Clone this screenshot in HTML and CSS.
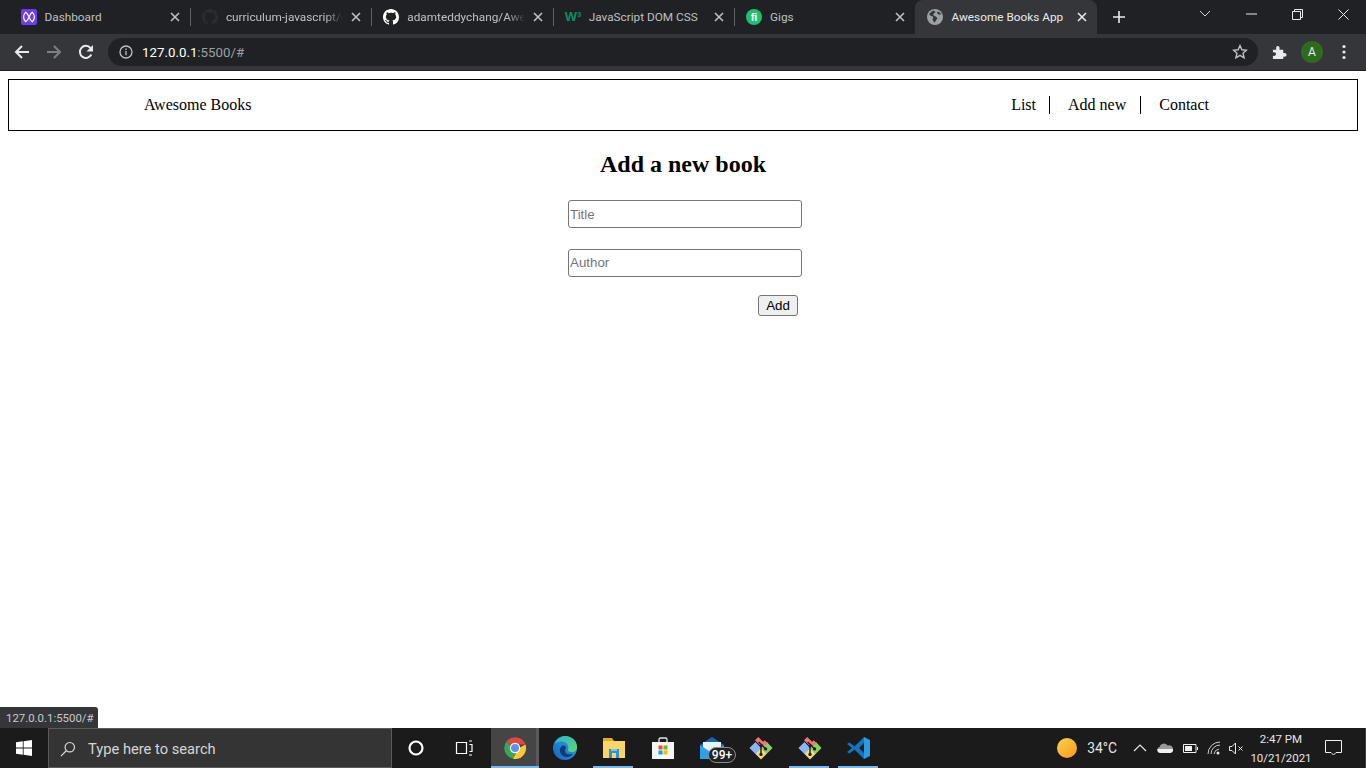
FILE: index.html
```html
<!DOCTYPE html>
<html>
<head>
    <meta charset="utf-8">
    <title>Awesome Books App</title>
    <link rel="stylesheet" href="styles.css">
</head>
<body>
    <svg class="defs" width="0" height="0">
        <defs>
            <linearGradient id="cloud-fill" x1="0" y1="0" x2="0" y2="1"><stop offset="0.55" stop-color="#9a9a9a"/><stop offset="0.56" stop-color="#f0f0f0"/></linearGradient>
        </defs>
        <symbol id="tab-close" viewBox="0 0 10 10"><path d="M1 1l8 8M9 1l-8 8" stroke="currentColor" stroke-width="1.6" fill="none"/></symbol>
        <symbol id="octocat" viewBox="0 0 16 16"><path fill="currentColor" d="M8 0C3.58 0 0 3.58 0 8c0 3.54 2.29 6.53 5.47 7.59.4.07.55-.17.55-.38 0-.19-.01-.82-.01-1.49-2.01.37-2.53-.49-2.69-.94-.09-.23-.48-.94-.82-1.13-.28-.15-.68-.52-.01-.53.63-.01 1.08.58 1.23.82.72 1.21 1.87.87 2.33.66.07-.52.28-.87.51-1.07-1.78-.2-3.64-.89-3.64-3.95 0-.87.31-1.59.82-2.15-.08-.2-.36-1.02.08-2.12 0 0 .67-.21 2.2.82.64-.18 1.32-.27 2-.27.68 0 1.36.09 2 .27 1.53-1.04 2.2-.82 2.2-.82.44 1.1.16 1.92.08 2.12.51.56.82 1.27.82 2.15 0 3.07-1.87 3.75-3.65 3.95.29.25.54.73.54 1.48 0 1.07-.01 1.93-.01 2.2 0 .21.15.46.55.38A8.013 8.013 0 0016 8c0-4.42-3.58-8-8-8z"/></symbol>
        <symbol id="git-gui" viewBox="0 0 26 26">
            <path fill="#f0dc78" d="M13 25.500l-6.500-6.500L13 12.500l6.500 6.500z"/>
            <path fill="#8cb4fa" d="M.5 13L7 6.500l6 6.500-6 6.500z"/>
            <path fill="#8ccf64" d="M13 13l6.500-6.500L25.500 13 19 19.500z"/>
            <path fill="#f07878" d="M6.500 4.500L10 1l5.500 5.500L12 10zM13.500 8l3.500-3.500 3 3L16.500 11z"/>
            <path d="M10.500 6.500l7 7M13 12v8" stroke="#222" stroke-width="1.6" fill="none"/>
            <circle cx="13" cy="20" r="1.800" fill="#222"/>
            <circle cx="18" cy="14" r="1.800" fill="#222"/>
        </symbol>
    </svg>

    <header class="browser-top">
        <div class="tab-strip">
            <div class="tab">
                <svg class="favicon" viewBox="0 0 16 16"><rect width="16" height="16" rx="2" fill="#6d3df5"/><path d="M4.800 3.200c-3 3.200-3 6.400 0 9.600 1.500-1 2.400-2.800 3.200-4.800.8 2 1.700 3.800 3.200 4.800 3-3.200 3-6.400 0-9.600C9.700 4.200 8.800 6 8 8c-.8-2-1.700-3.800-3.200-4.800z" fill="none" stroke="#fff" stroke-width="1.200"/></svg>
                <span class="tab-title">Dashboard</span>
                <svg class="tab-x"><use href="#tab-close"/></svg>
            </div>
            <div class="tab">
                <svg class="favicon favicon-dim"><use href="#octocat"/></svg>
                <span class="tab-title tab-fade">curriculum-javascript/curriculum</span>
                <svg class="tab-x"><use href="#tab-close"/></svg>
            </div>
            <div class="tab">
                <svg class="favicon favicon-white"><use href="#octocat"/></svg>
                <span class="tab-title tab-fade">adamteddychang/Awesome-Books</span>
                <svg class="tab-x"><use href="#tab-close"/></svg>
            </div>
            <div class="tab">
                <span class="favicon favicon-w3">W³</span>
                <span class="tab-title">JavaScript DOM CSS</span>
                <svg class="tab-x"><use href="#tab-close"/></svg>
            </div>
            <div class="tab tab-before-active">
                <span class="favicon favicon-fi">fi</span>
                <span class="tab-title">Gigs</span>
                <svg class="tab-x"><use href="#tab-close"/></svg>
            </div>
            <div class="tab tab-active">
                <svg class="favicon" viewBox="0 0 16 16"><circle cx="8" cy="8" r="8" fill="#9aa0a6"/><path d="M7 1.500C5 2 3 3.500 2.300 5.500l1.200 1.200 2 .5.800 1.500-.8 1.500 1.500 3.300c.6 0 1-.2 1.200-.8l1.300-2.200 1-1-1.300-1.800-2.200-.9-1-1.300L7 4.200l1.500-1zM10.500 2.500l-.5 1.500 1.500 1.500 2.800 0c-.6-1.300-2.300-2.700-3.800-3z" fill="#35363a"/></svg>
                <span class="tab-title">Awesome Books App</span>
                <svg class="tab-x"><use href="#tab-close"/></svg>
            </div>
            <svg class="new-tab" viewBox="0 0 12 12"><path d="M6 0v12M0 6h12" stroke="#e8eaed" stroke-width="1.600"/></svg>
            <div class="window-btns">
                <span class="win-btn"><svg width="12" height="8" viewBox="0 0 12 8"><path d="M1 1l5 5 5-5" stroke="#d0d2d5" fill="none"/></svg></span>
                <span class="win-btn"><svg width="11" height="2" viewBox="0 0 11 2"><path d="M0 1h11" stroke="#e8eaed"/></svg></span>
                <span class="win-btn"><svg width="11" height="11" viewBox="0 0 11 11"><path d="M.5 2.500h8v8h-8zM2.500 2.500v-2h8v8h-2" stroke="#e8eaed" fill="none"/></svg></span>
                <span class="win-btn"><svg width="11" height="11" viewBox="0 0 11 11"><path d="M.5.500l10 10M10.500.500l-10 10" stroke="#e8eaed" fill="none"/></svg></span>
            </div>
        </div>
        <div class="toolbar">
            <svg class="tool-icon" viewBox="0 0 16 16"><path d="M15 8H2M8 2L2 8l6 6" stroke="#e8eaed" stroke-width="2" fill="none"/></svg>
            <svg class="tool-icon" viewBox="0 0 16 16"><path d="M1 8h13M8 2l6 6-6 6" stroke="#7d7f83" stroke-width="2" fill="none"/></svg>
            <svg class="tool-icon" viewBox="0 0 16 16"><path d="M13.300 10.500A6 6 0 1 1 12.500 4" stroke="#e8eaed" stroke-width="2" fill="none"/><path d="M15 1v6.500H8.500z" fill="#e8eaed"/></svg>
            <div class="address-bar">
                <svg class="info-icon" viewBox="0 0 14 14"><circle cx="7" cy="7" r="6" stroke="#bdc1c6" stroke-width="1.300" fill="none"/><path d="M7 6v4.200M7 3.500v1.400" stroke="#bdc1c6" stroke-width="1.300"/></svg>
                <span class="url"><b>127.0.0.1</b>:5500/#</span>
                <svg class="star-icon" viewBox="0 0 16 16"><path d="M8 1.500l1.900 4.300 4.600.4-3.500 3 1.100 4.600L8 11.400l-4.100 2.400L5 9.200l-3.500-3 4.600-.4z" stroke="#bdc1c6" stroke-width="1.400" fill="none"/></svg>
            </div>
            <svg class="puzzle-icon" viewBox="0 0 16 16"><path d="M1 5h3.500C4 2 5 1 6.200 1S8.500 2 8 5h4v3.500c3-.5 3.500 1 3.500 2s-.5 2.500-3.500 2V15H1v-3.500c2.500.5 3.200-.7 3.200-1.800S3.500 7.400 1 8z" fill="#e8eaed"/></svg>
            <span class="avatar">A</span>
            <svg class="menu-dots" viewBox="0 0 4 16"><circle cx="2" cy="2.500" r="1.600" fill="#e8eaed"/><circle cx="2" cy="8" r="1.600" fill="#e8eaed"/><circle cx="2" cy="13.500" r="1.600" fill="#e8eaed"/></svg>
        </div>
    </header>

    <main class="page">
        <nav class="main-nav">
            <a class="brand" href="#">Awesome Books</a>
            <ul class="nav-links">
                <li><a href="#">List</a></li>
                <li><a href="#">Add new</a></li>
                <li><a href="#">Contact</a></li>
            </ul>
        </nav>

        <h2 class="section-title">Add a new book</h2>
        <form class="book-form">
            <input class="book-input" type="text" placeholder="Title">
            <input class="book-input" type="text" placeholder="Author">
            <button class="add-btn" type="button">Add</button>
        </form>

        <div class="status-bubble">127.0.0.1:5500/#</div>
    </main>

    <footer class="taskbar">
        <span class="start-btn">
            <svg width="16" height="16" viewBox="0 0 16 16"><path fill="#fff" d="M0 2.300l6.800-1v6.200H0zM7.600 1.200L16 0v7.500H7.600zM0 8.400h6.800v6.300l-6.800-1zM7.600 8.400H16V16l-8.400-1.200z"/></svg>
        </span>
        <div class="search-box">
            <svg width="16" height="16" viewBox="0 0 18 18"><circle cx="11" cy="7" r="5.300" stroke="#ddd" stroke-width="1.300" fill="none"/><path d="M7 11l-6 6" stroke="#ddd" stroke-width="1.300"/></svg>
            <span>Type here to search</span>
        </div>
        <span class="bar-btn"><svg width="16" height="16" viewBox="0 0 16 16"><circle cx="8" cy="8" r="6.500" stroke="#fff" stroke-width="2.200" fill="none"/></svg></span>
        <span class="bar-btn"><svg width="18" height="16" viewBox="0 0 18 16"><path d="M1.500 2.500h10v11h-10zM14 1h3M14 15h3M14.500 4.500h2.500v7h-2.500" stroke="#fff" stroke-width="1.200" fill="none"/></svg></span>

        <span class="app app-active app-open">
            <svg class="app-icon" viewBox="0 0 24 24">
                <path d="M12 12L3.500 5.500A11 11 0 0 1 22.500 8.500H12z" fill="#e2483c"/>
                <path d="M3.500 5.500A11 11 0 0 0 10 22.800l4-7.500z" fill="#3aa757"/>
                <path d="M22.500 8.500A11 11 0 0 1 10 22.800L16 12z" fill="#fcc934"/>
                <circle cx="12" cy="12" r="5.200" fill="#fff"/>
                <circle cx="12" cy="12" r="4" fill="#5b93ee"/>
            </svg>
        </span>
        <span class="app">
            <svg class="app-icon" viewBox="0 0 24 24">
                <defs>
                    <linearGradient id="edge-a" x1="0" y1="1" x2="1" y2="0"><stop offset="0" stop-color="#1565c0"/><stop offset="1" stop-color="#2aa8e0"/></linearGradient>
                    <linearGradient id="edge-b" x1="0" y1="0" x2="1" y2="1"><stop offset="0" stop-color="#2bb4d8"/><stop offset="1" stop-color="#5fd868"/></linearGradient>
                </defs>
                <circle cx="12" cy="12" r="12" fill="url(#edge-a)"/>
                <path d="M2 8C4 2 9 0 12 0c7 0 12 5 12 11 0 3-2 5-5 5-3 0-4-1-4-2 1-3 0-7-4-8-4-1-7 0-9 2z" fill="url(#edge-b)"/>
                <path d="M9 10c-3 2-3 7 1 10 3 2 7 1 9-1 1-1 0-1-1-1-4 1-6-1-6-3 0-2 1-3 1-4-1-1-3-2-4-1z" fill="#123a7a"/>
            </svg>
        </span>
        <span class="app app-open">
            <svg class="app-icon" viewBox="0 0 24 24">
                <path d="M1 2h9l2 3H1z" fill="#e8a91f"/>
                <path d="M1 5h22v17H1z" fill="#fbd665"/>
                <path d="M7 22v-9h10v9h-3v-5h-4v5z" fill="#2a93d8"/>
                <path d="M9 13h6v2H9z" fill="#7cc4ee"/>
            </svg>
        </span>
        <span class="app">
            <svg class="app-icon" viewBox="0 0 24 24">
                <path d="M8 7V3.500A1.500 1.500 0 0 1 9.500 2h5A1.500 1.500 0 0 1 16 3.500V7" stroke="#e8e8e8" stroke-width="1.300" fill="none"/>
                <path d="M1 6h22v17H1z" fill="#f5f5f5"/>
                <path d="M7.500 9.500h4v4h-4z" fill="#f25022"/>
                <path d="M12.500 9.500h4v4h-4z" fill="#7fba00"/>
                <path d="M7.500 14.500h4v4h-4z" fill="#00a4ef"/>
                <path d="M12.500 14.500h4v4h-4z" fill="#ffb900"/>
            </svg>
        </span>
        <span class="app">
            <svg class="app-icon" viewBox="0 0 24 24">
                <path d="M0 9l12-8 12 8v2H0z" fill="#1666b8"/>
                <path d="M3 6h18v9H3z" fill="#e6f3fb"/>
                <path d="M0 9l12 8 12-8v14H0z" fill="#2ea0ea"/>
            </svg>
            <span class="mail-badge">99+</span>
        </span>
        <span class="app"><svg class="app-icon"><use href="#git-gui"/></svg></span>
        <span class="app app-open"><svg class="app-icon"><use href="#git-gui"/></svg></span>
        <span class="app app-open">
            <svg class="app-icon" viewBox="0 0 24 24">
                <path d="M17 1l6 3v16l-6 3z" fill="#2a9de0"/>
                <path d="M17 1L7.500 10.500 2.500 6.500 0 8l5 4-5 4 2.500 1.500 5-4L17 23v-6l-5-5 5-5z" fill="#0f78c4"/>
            </svg>
        </span>

        <div class="tray">
            <span class="sun"></span>
            <span class="temp">34°C</span>
            <svg class="tray-chevron" width="14" height="8" viewBox="0 0 14 8"><path d="M1 7l6-6 6 6" stroke="#e6e6e6" stroke-width="1.200" fill="none"/></svg>
            <svg class="tray-cloud" width="16" height="10" viewBox="0 0 16 10"><path d="M3 10a3 3 0 0 1-.5-5.900A4.500 4.500 0 0 1 10.600 2.600 3.700 3.700 0 0 1 13.600 10z" fill="url(#cloud-fill)"/></svg>
            <svg class="tray-battery" width="15" height="9" viewBox="0 0 15 9"><path d="M.5.500h12.500v8H.5z" stroke="#f0f0f0" fill="none"/><path d="M2 2h7v5H2z" fill="#f0f0f0"/><path d="M14 3h1v3h-1z" fill="#f0f0f0"/></svg>
            <svg class="tray-wifi" width="14" height="14" viewBox="0 0 14 14"><path d="M1 13A12 12 0 0 1 13 1M4 13a9 9 0 0 1 9-9M7 13a6 6 0 0 1 5-5" stroke="#cfcfcf" fill="none"/><circle cx="11" cy="12" r="1.500" fill="#e8e8e8"/></svg>
            <svg class="tray-speaker" width="15" height="13" viewBox="0 0 15 13"><path d="M.5 4.500h2.500L6.500 1v11L3 8.500H.5z" stroke="#e8e8e8" fill="none"/><path d="M9.500 4.500l4 4M13.500 4.500l-4 4" stroke="#e8e8e8"/></svg>
            <div class="clock">
                <span>2:47 PM</span>
                <span>10/21/2021</span>
            </div>
            <svg class="tray-notify" width="17" height="16" viewBox="0 0 17 16"><path d="M.5.500h16v12H11l-2.500 2.500L6 12.500H.5z" stroke="#f0f0f0" fill="none"/></svg>
        </div>
    </footer>
</body>
</html>
```

FILE: styles.css
```css
* {
    box-sizing: border-box;
}

body {
    margin: 0;
    height: 768px;
    display: flex;
    flex-direction: column;
    overflow: hidden;
    background-color: #ffffff;
    font-family: "Liberation Serif", serif;
}

.defs {
    position: absolute;
}

/* browser chrome */
.browser-top {
    flex: none;
    height: 71px;
    background-color: #202124;
    border-bottom: 1px solid #202124;
    font-family: Roboto, "Liberation Sans", sans-serif;
}

.tab-strip {
    height: 34px;
    display: flex;
    padding-left: 8.5px;
}

.tab {
    position: relative;
    width: 181.4px;
    height: 34px;
    display: flex;
    align-items: center;
    padding: 0 10px 0 12px;
    color: #bdc1c6;
    font-size: 11.8px;
}

.tab::after {
    content: "";
    position: absolute;
    right: -1px;
    top: 8px;
    width: 1px;
    height: 18px;
    background-color: #5f6368;
}

.tab-before-active::after,
.tab-active::after {
    display: none;
}

.tab-active {
    background-color: #35363a;
    border-radius: 8px 8px 0 0;
    color: #e8eaed;
}

.favicon {
    flex: none;
    width: 16px;
    height: 16px;
    margin-right: 8px;
}

.favicon-dim {
    color: #2a2c30;
}

.favicon-white {
    color: #ffffff;
}

.favicon-w3 {
    color: #0a8f63;
    font: bold 13px/16px "Liberation Sans", sans-serif;
    white-space: nowrap;
}

.favicon-fi {
    background-color: #1dbf73;
    border-radius: 50%;
    color: #ffffff;
    font: bold 11px/16px "Liberation Sans", sans-serif;
    text-align: center;
}

.tab-title {
    flex: 1;
    overflow: hidden;
    white-space: nowrap;
}

.tab-fade {
    -webkit-mask-image: linear-gradient(to right, #000 85%, transparent 100%);
    mask-image: linear-gradient(to right, #000 85%, transparent 100%);
}

.tab-x {
    flex: none;
    width: 10px;
    height: 10px;
    margin-left: 8px;
}

.new-tab {
    width: 12px;
    height: 12px;
    margin: 11px 0 0 16px;
}

.window-btns {
    margin-left: auto;
    display: flex;
}

.win-btn {
    width: 46px;
    height: 28px;
    display: flex;
    align-items: center;
    justify-content: center;
}

.toolbar {
    height: 36px;
    display: flex;
    align-items: center;
    background-color: #35363a;
}

.tool-icon {
    width: 16px;
    height: 16px;
    margin-left: 14px;
    margin-right: 2px;
}

.address-bar {
    width: 1150px;
    height: 28px;
    margin-left: 12px;
    display: flex;
    align-items: center;
    padding: 0 10px 0 11px;
    background-color: #202124;
    border-radius: 14px;
    color: #9aa0a6;
    font-size: 13.3px;
}

.address-bar b {
    font-weight: 400;
    color: #ffffff;
}

.info-icon {
    width: 14px;
    height: 14px;
    margin-right: 9px;
}

.url {
    flex: 1;
}

.star-icon {
    width: 16px;
    height: 16px;
}

.puzzle-icon {
    width: 15px;
    height: 15px;
    margin-left: 14px;
}

.avatar {
    width: 22px;
    height: 22px;
    margin-left: 14px;
    border-radius: 50%;
    background-color: #2e6b1e;
    color: #e8eaed;
    font-size: 12px;
    line-height: 22px;
    text-align: center;
}

.menu-dots {
    width: 4px;
    height: 16px;
    margin-left: 19px;
}

/* the page itself */
.page {
    position: relative;
    flex: 1;
    padding: 8px;
    color: #000000;
}

.main-nav {
    height: 52px;
    display: flex;
    align-items: center;
    justify-content: space-between;
    padding: 0 135px;
    border: 1px solid #000000;
    font-size: 16px;
}

.main-nav a {
    color: #000000;
    text-decoration: none;
}

.nav-links {
    display: flex;
    margin: 0;
    padding: 0;
    list-style: none;
}

.nav-links li {
    padding: 0 13px 0 18px;
    border-right: 1px solid #000000;
}

.nav-links li:nth-child(2) {
    padding-right: 14px;
}

.nav-links li:last-child {
    border-right: none;
}

.section-title {
    margin: 20px 0 22px;
    font-size: 24px;
    text-align: center;
}

.book-form {
    width: 238px;
    margin: 0 auto;
    padding-left: 4px;
    display: flex;
    flex-direction: column;
}

.book-input {
    height: 28px;
    padding: 1px;
    border: 1px solid #767676;
    border-radius: 3px;
    font-family: "Liberation Sans", sans-serif;
    font-size: 13.333px;
}

.book-input + .book-input {
    margin-top: 21px;
    padding-bottom: 3px;
}

.book-input::placeholder {
    color: #757575;
}

.add-btn {
    align-self: flex-end;
    width: 40px;
    height: 21px;
    margin: 18px 4px 0 0;
    padding: 0;
    background-color: #efefef;
    border: 1px solid #767676;
    border-radius: 3px;
    font-family: "Liberation Sans", sans-serif;
    font-size: 13.333px;
    color: #000000;
}

.status-bubble {
    position: absolute;
    left: 0;
    bottom: 0;
    width: 98px;
    height: 21px;
    padding-left: 6px;
    background-color: #35363a;
    border-top-right-radius: 3px;
    color: #c8cacd;
    font: 11.4px/22px Roboto, "Liberation Sans", sans-serif;
}

/* windows taskbar */
.taskbar {
    flex: none;
    height: 40px;
    display: flex;
    align-items: center;
    background-color: #1b1b1b;
    color: #ffffff;
    font-family: Roboto, "Liberation Sans", sans-serif;
}

.start-btn {
    width: 48px;
    display: flex;
    justify-content: center;
}

.search-box {
    width: 344px;
    height: 40px;
    display: flex;
    align-items: center;
    gap: 12px;
    padding: 1px 0 0 11px;
    background-color: #343434;
    border: 1px solid #5c5c5c;
    color: #d6d6d6;
    font-size: 14.7px;
}

.bar-btn {
    width: 48px;
    display: flex;
    justify-content: center;
}

.app {
    position: relative;
    width: 49px;
    height: 40px;
    display: flex;
    align-items: center;
    justify-content: center;
}

.app-icon {
    width: 24px;
    height: 24px;
}

.app-open::after {
    content: "";
    position: absolute;
    left: 4px;
    right: 5px;
    bottom: 0;
    height: 2px;
    background-color: #76b9ed;
}

.app-active {
    width: 48px;
    margin: 0 1px 0 3px;
    padding-left: 2px;
    background-color: #454545;
    border-right: 3px solid #5a5a5a;
}

.app-active::after {
    left: 0;
    right: -3px;
}

.mail-badge {
    position: absolute;
    left: 21px;
    top: 19px;
    width: 28px;
    height: 16px;
    border: 1px solid #8a8a8a;
    border-radius: 8px;
    background-color: #222222;
    color: #ffffff;
    font-size: 12px;
    font-weight: 500;
    line-height: 14px;
    text-align: center;
}

.tray {
    margin-left: auto;
    height: 40px;
    display: flex;
    align-items: center;
    font-size: 11.5px;
    border-right: 1px solid #3a3a3a;
    padding-right: 2px;
}

.sun {
    width: 20px;
    height: 20px;
    border-radius: 50%;
    background: linear-gradient(135deg, #ffd24a, #f79a1a);
}

.temp {
    margin-left: 10px;
    font-size: 13.8px;
    color: #e6e6e6;
}

.tray-chevron {
    margin-left: 16px;
}

.tray-cloud {
    margin-left: 10px;
}

.tray-battery {
    margin-left: 10px;
}

.tray-wifi {
    margin-left: 9px;
}

.tray-speaker {
    margin-left: 8px;
}

.clock {
    width: 62px;
    margin-left: 6px;
    display: flex;
    flex-direction: column;
    align-items: center;
    gap: 3px;
    color: #e6e6e6;
    line-height: 16px;
}

.tray-notify {
    margin: 0 21px 0 13px;
}
```
